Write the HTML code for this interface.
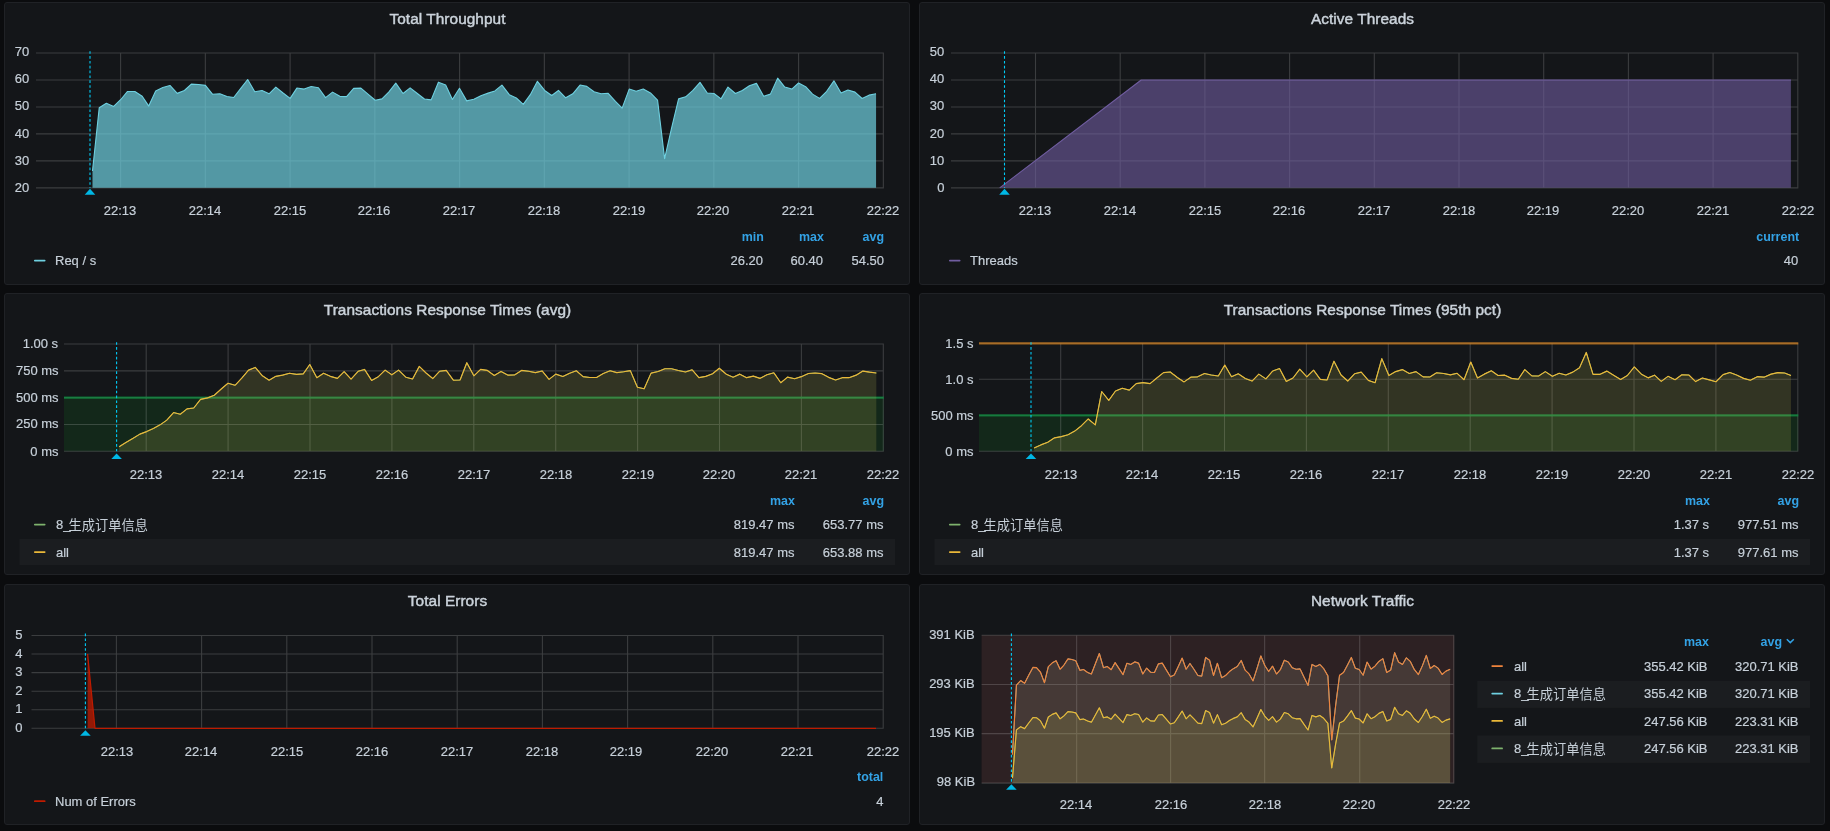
<!DOCTYPE html>
<html lang="en"><head><meta charset="utf-8"><title>JMeter Dashboard</title>
<style>
html,body{margin:0;padding:0;background:#0b0c0e;}
body{width:1830px;height:831px;position:relative;overflow:hidden;
 font-family:"Liberation Sans","Noto Sans CJK SC",sans-serif;color:#c7d0d9;font-size:13px;}
.panel{position:absolute;box-sizing:border-box;background:#141619;border:1px solid #202226;border-radius:3px;}
.panel svg{position:absolute;left:-1px;top:-1px;overflow:visible;}
.t{position:absolute;white-space:nowrap;line-height:16px;height:16px;transform:scaleX(0.955);}
.labels{position:absolute;left:0;top:0;right:0;bottom:0;will-change:transform;}
.al{transform-origin:0 50%;}
.ar{transform-origin:100% 50%;}
.ac{transform-origin:50% 50%;}
.title{font-size:15.4px;color:#cbd3db;-webkit-text-stroke:0.45px #cbd3db;letter-spacing:0.05px;transform:none;}
.ax{font-size:13.6px;-webkit-text-stroke:0.2px #c7d0d9;}
.lg{font-size:13.6px;-webkit-text-stroke:0.2px #c7d0d9;}
.hd{font-size:13.4px;font-weight:bold;color:#33a2e5;transform:scaleX(0.93);}
.cj{font-size:13.85px;line-height:0;position:relative;top:1px;margin-left:-2px;-webkit-text-stroke:0;}
</style></head>
<body>
<div class="panel" style="left:4px;top:2px;width:906px;height:282.5px"><svg width="906" height="282.5" viewBox="4 2 906 282.5" ><path d="M36 53H883.85M36 79.97H883.85M36 106.94H883.85M36 133.91H883.85M36 160.88H883.85M36 187.85H883.85M120.6 52.5V188.35M205.35 52.5V188.35M290.1 52.5V188.35M374.85 52.5V188.35M459.6 52.5V188.35M544.35 52.5V188.35M629.1 52.5V188.35M713.85 52.5V188.35M798.6 52.5V188.35M883.35 52.5V188.35" stroke="rgba(200,200,200,0.22)" stroke-width="1.1" fill="none"/><polygon points="92.49,187.85 92.49,171.02 99.23,107.82 106.36,103.2 113.68,106.47 120.62,99.73 127.55,91.45 134.87,91.45 142.2,96.26 148.75,106.09 155.68,91.06 162.81,87.59 169.94,85.47 177.26,93.37 184.39,90.48 191.33,84.12 198.46,84.51 205.39,85.38 212.64,94.31 219.88,93.81 226.96,96.5 233.7,97.51 240.78,88.42 247.68,79.49 254.76,91.79 262.01,90.44 269.08,93.81 275.82,87.07 283.07,92.97 290.14,98.36 296.88,88.08 304.13,89.09 311.2,86.56 318.45,87.74 325.53,97.68 332.6,92.12 339.85,96.34 346.59,96.67 353.66,88.42 360.91,88.08 367.99,94.14 375.23,100.21 381.97,98.86 388.71,92.12 395.79,83.19 403.03,93.47 410.11,87.91 417.35,93.47 424.43,99.03 431.17,99.87 438.42,82.18 445.66,85.05 452.4,99.54 459.48,88.25 466.72,100.88 473.8,99.2 480.88,95.83 488.12,93.13 494.86,90.94 501.94,85.05 509.27,94.65 516.34,98.02 523.25,104.42 530.33,94.65 537.41,81.34 544.65,90.44 551.73,95.49 558.47,90.44 565.71,97.85 572.79,93.81 580.03,85.05 586.77,86.39 594.02,91.79 601.1,93.81 608.17,93.3 615.42,101.39 622.16,108.13 629.23,89.09 636.14,91.28 643.22,89.09 650.46,92.97 657.54,100.04 664.62,158.68 671.52,128.35 678.6,98.86 685.68,96.84 692.92,90.44 700,82.35 707.25,92.97 713.98,93.47 721.06,98.86 727.97,87.07 735.38,93.47 742.29,90.44 749.37,85.72 756.44,83.36 763.69,96.34 770.43,94.14 777.67,78.14 784.75,87.07 791.83,89.09 798.57,83.02 805.64,86.73 812.55,94.14 819.63,98.36 826.71,91.28 833.95,80.83 841.03,92.97 847.94,89.93 855.01,92.12 862.09,98.53 869,95.16 876.07,93.81 876.07,187.85" fill="#6ed0e0" fill-opacity="0.7"/><polyline points="92.49,171.02 99.23,107.82 106.36,103.2 113.68,106.47 120.62,99.73 127.55,91.45 134.87,91.45 142.2,96.26 148.75,106.09 155.68,91.06 162.81,87.59 169.94,85.47 177.26,93.37 184.39,90.48 191.33,84.12 198.46,84.51 205.39,85.38 212.64,94.31 219.88,93.81 226.96,96.5 233.7,97.51 240.78,88.42 247.68,79.49 254.76,91.79 262.01,90.44 269.08,93.81 275.82,87.07 283.07,92.97 290.14,98.36 296.88,88.08 304.13,89.09 311.2,86.56 318.45,87.74 325.53,97.68 332.6,92.12 339.85,96.34 346.59,96.67 353.66,88.42 360.91,88.08 367.99,94.14 375.23,100.21 381.97,98.86 388.71,92.12 395.79,83.19 403.03,93.47 410.11,87.91 417.35,93.47 424.43,99.03 431.17,99.87 438.42,82.18 445.66,85.05 452.4,99.54 459.48,88.25 466.72,100.88 473.8,99.2 480.88,95.83 488.12,93.13 494.86,90.94 501.94,85.05 509.27,94.65 516.34,98.02 523.25,104.42 530.33,94.65 537.41,81.34 544.65,90.44 551.73,95.49 558.47,90.44 565.71,97.85 572.79,93.81 580.03,85.05 586.77,86.39 594.02,91.79 601.1,93.81 608.17,93.3 615.42,101.39 622.16,108.13 629.23,89.09 636.14,91.28 643.22,89.09 650.46,92.97 657.54,100.04 664.62,158.68 671.52,128.35 678.6,98.86 685.68,96.84 692.92,90.44 700,82.35 707.25,92.97 713.98,93.47 721.06,98.86 727.97,87.07 735.38,93.47 742.29,90.44 749.37,85.72 756.44,83.36 763.69,96.34 770.43,94.14 777.67,78.14 784.75,87.07 791.83,89.09 798.57,83.02 805.64,86.73 812.55,94.14 819.63,98.36 826.71,91.28 833.95,80.83 841.03,92.97 847.94,89.93 855.01,92.12 862.09,98.53 869,95.16 876.07,93.81" fill="none" stroke="#6ed0e0" stroke-width="1.1" stroke-linejoin="round"/><path d="M90 51.2V187.85" stroke="#00cbf5" stroke-width="1.1" stroke-dasharray="2.65 2.2" fill="none"/><path d="M84.7 194.85L90 188.75L95.3 194.85Z" fill="#00b7e4"/><path d="M34.8 260.55h9.9" stroke="#6ed0e0" stroke-width="1.7" stroke-linecap="round" fill="none"/></svg><div class="labels"><div class="t title ac" style="left:292.5px;width:300px;text-align:center;top:8px;">Total Throughput</div><div class="t ax ar" style="right:879.7px;top:41px;">70</div><div class="t ax ar" style="right:879.7px;top:68px;">60</div><div class="t ax ar" style="right:879.7px;top:95px;">50</div><div class="t ax ar" style="right:879.7px;top:123px;">40</div><div class="t ax ar" style="right:879.7px;top:150px;">30</div><div class="t ax ar" style="right:879.7px;top:177px;">20</div><div class="t ax ac" style="left:-34.8px;width:300px;text-align:center;top:200px;">22:13</div><div class="t ax ac" style="left:49.95px;width:300px;text-align:center;top:200px;">22:14</div><div class="t ax ac" style="left:134.7px;width:300px;text-align:center;top:200px;">22:15</div><div class="t ax ac" style="left:219.45px;width:300px;text-align:center;top:200px;">22:16</div><div class="t ax ac" style="left:304.2px;width:300px;text-align:center;top:200px;">22:17</div><div class="t ax ac" style="left:388.95px;width:300px;text-align:center;top:200px;">22:18</div><div class="t ax ac" style="left:473.7px;width:300px;text-align:center;top:200px;">22:19</div><div class="t ax ac" style="left:558.45px;width:300px;text-align:center;top:200px;">22:20</div><div class="t ax ac" style="left:643.2px;width:300px;text-align:center;top:200px;">22:21</div><div class="t ax ac" style="left:727.85px;width:300px;text-align:center;top:200px;">22:22</div><div class="t hd ar" style="right:145.7px;top:226px;">min</div><div class="t hd ar" style="right:85.2px;top:226px;">max</div><div class="t hd ar" style="right:25px;top:226px;">avg</div><div class="t lg al" style="left:50.4px;top:250px;">Req / s</div><div class="t lg ar" style="right:146px;top:250px;">26.20</div><div class="t lg ar" style="right:85.5px;top:250px;">60.40</div><div class="t lg ar" style="right:25.4px;top:250px;">54.50</div></div></div>
<div class="panel" style="left:919px;top:2px;width:906px;height:282.5px"><svg width="906" height="282.5" viewBox="919 2 906 282.5" ><path d="M951 53H1798.3M951 79.97H1798.3M951 106.94H1798.3M951 133.91H1798.3M951 160.88H1798.3M951 187.85H1798.3M1035.5 52.5V188.35M1120.2 52.5V188.35M1204.9 52.5V188.35M1289.6 52.5V188.35M1374.3 52.5V188.35M1459 52.5V188.35M1543.7 52.5V188.35M1628.4 52.5V188.35M1713.1 52.5V188.35M1797.8 52.5V188.35" stroke="rgba(200,200,200,0.22)" stroke-width="1.1" fill="none"/><polygon points="999.7,187.85 999.7,187.85 1141.2,79.97 1790.9,79.97 1790.9,187.85" fill="#705da0" fill-opacity="0.6"/><polyline points="999.7,187.85 1141.2,79.97 1790.9,79.97" fill="none" stroke="#705da0" stroke-width="1.1" stroke-linejoin="round"/><path d="M1004.5 51.2V187.85" stroke="#00cbf5" stroke-width="1.1" stroke-dasharray="2.65 2.2" fill="none"/><path d="M999.2 194.85L1004.5 188.75L1009.8 194.85Z" fill="#00b7e4"/><path d="M949.8 260.55h9.9" stroke="#705da0" stroke-width="1.7" stroke-linecap="round" fill="none"/></svg><div class="labels"><div class="t title ac" style="left:292.5px;width:300px;text-align:center;top:8px;">Active Threads</div><div class="t ax ar" style="right:879.7px;top:41px;">50</div><div class="t ax ar" style="right:879.7px;top:68px;">40</div><div class="t ax ar" style="right:879.7px;top:95px;">30</div><div class="t ax ar" style="right:879.7px;top:123px;">20</div><div class="t ax ar" style="right:879.7px;top:150px;">10</div><div class="t ax ar" style="right:879.7px;top:177px;">0</div><div class="t ax ac" style="left:-34.9px;width:300px;text-align:center;top:200px;">22:13</div><div class="t ax ac" style="left:49.8px;width:300px;text-align:center;top:200px;">22:14</div><div class="t ax ac" style="left:134.5px;width:300px;text-align:center;top:200px;">22:15</div><div class="t ax ac" style="left:219.2px;width:300px;text-align:center;top:200px;">22:16</div><div class="t ax ac" style="left:303.9px;width:300px;text-align:center;top:200px;">22:17</div><div class="t ax ac" style="left:388.6px;width:300px;text-align:center;top:200px;">22:18</div><div class="t ax ac" style="left:473.3px;width:300px;text-align:center;top:200px;">22:19</div><div class="t ax ac" style="left:558px;width:300px;text-align:center;top:200px;">22:20</div><div class="t ax ac" style="left:642.7px;width:300px;text-align:center;top:200px;">22:21</div><div class="t ax ac" style="left:727.5px;width:300px;text-align:center;top:200px;">22:22</div><div class="t hd ar" style="right:25px;top:226px;">current</div><div class="t lg al" style="left:50.3px;top:250px;">Threads</div><div class="t lg ar" style="right:25.4px;top:250px;">40</div></div></div>
<div class="panel" style="left:4px;top:293px;width:906px;height:282px"><svg width="906" height="282" viewBox="4 293 906 282" ><rect x="64" y="397.66" width="819.8" height="53.66" fill="rgb(11,237,50)" fill-opacity="0.085"/><path d="M64 344H883.8M64 370.83H883.8M64 397.66H883.8M64 424.49H883.8M64 451.32H883.8M146.2 343.5V451.82M228.1 343.5V451.82M310 343.5V451.82M391.9 343.5V451.82M473.8 343.5V451.82M555.7 343.5V451.82M637.6 343.5V451.82M719.5 343.5V451.82M801.4 343.5V451.82M883.3 343.5V451.82" stroke="rgba(200,200,200,0.22)" stroke-width="1.1" fill="none"/><path d="M64 397.66H883.8" stroke="rgb(6,163,69)" stroke-opacity="0.6" stroke-width="2.2"/><polygon points="119.12,451.32 119.12,446.76 125.86,442.55 133.11,438.34 139.85,434.13 146.59,431.6 153.33,428.57 160.07,424.86 166.81,420.14 173.55,412.56 180.29,414.25 187.03,408.85 193.77,408.01 200.51,399.42 207.58,397.9 214.32,395.21 221.23,388.97 227.97,383.24 235.05,385.27 241.79,378.02 248.53,370.1 255.27,367.41 262.01,375.49 269.08,380.21 275.82,376.34 282.56,375.16 289.47,373.3 296.55,374.31 303.29,373.81 309.77,364.54 316.85,377.68 323.59,373.3 330.33,376.34 337.41,378.36 344.14,371.62 351.05,379.2 358.13,371.28 364.53,369.43 371.61,380.38 378.35,376.67 385.09,370.1 391.83,374.82 398.57,370.1 405.81,377.18 412.55,379.03 419.29,366.39 426.03,372.97 432.77,378.53 439.51,371.28 446.25,370.44 453.33,380.21 460.07,380.04 466.81,362.69 473.88,375.83 480.62,369.43 487.36,370.44 494.27,375.49 501.01,371.45 508.09,375.16 514.83,374.82 521.57,370.44 528.64,371.28 535.38,372.63 542.12,370.94 549.03,379.37 555.77,374.14 562.85,376.5 569.59,373.3 576.33,370.78 583.07,376.67 589.81,377.51 596.55,377.51 603.29,373.47 610.11,370.78 616.85,372.63 623.59,371.79 630.33,370.61 637.41,387.29 644.14,388.8 651.05,373.13 658.13,371.45 664.87,368.75 671.61,368.75 678.35,370.44 685.43,371.95 692.17,369.76 698.9,377.68 705.81,376.34 712.55,373.81 719.29,368.25 726.37,374.31 733.11,377.18 739.85,374.14 746.59,377.68 753.33,376.17 760.07,378.36 766.81,374.82 773.88,372.8 780.79,382.74 787.53,377.18 794.61,378.69 801.35,376.67 808.42,373.47 815.16,372.97 821.9,373.64 828.64,377.35 835.55,380.04 842.29,377.68 849.03,377.68 856.11,375.16 862.85,371.11 869.59,372.12 876.33,372.97 876.33,451.32" fill="#7eb26d" fill-opacity="0.1"/><polyline points="119.12,446.76 125.86,442.55 133.11,438.34 139.85,434.13 146.59,431.6 153.33,428.57 160.07,424.86 166.81,420.14 173.55,412.56 180.29,414.25 187.03,408.85 193.77,408.01 200.51,399.42 207.58,397.9 214.32,395.21 221.23,388.97 227.97,383.24 235.05,385.27 241.79,378.02 248.53,370.1 255.27,367.41 262.01,375.49 269.08,380.21 275.82,376.34 282.56,375.16 289.47,373.3 296.55,374.31 303.29,373.81 309.77,364.54 316.85,377.68 323.59,373.3 330.33,376.34 337.41,378.36 344.14,371.62 351.05,379.2 358.13,371.28 364.53,369.43 371.61,380.38 378.35,376.67 385.09,370.1 391.83,374.82 398.57,370.1 405.81,377.18 412.55,379.03 419.29,366.39 426.03,372.97 432.77,378.53 439.51,371.28 446.25,370.44 453.33,380.21 460.07,380.04 466.81,362.69 473.88,375.83 480.62,369.43 487.36,370.44 494.27,375.49 501.01,371.45 508.09,375.16 514.83,374.82 521.57,370.44 528.64,371.28 535.38,372.63 542.12,370.94 549.03,379.37 555.77,374.14 562.85,376.5 569.59,373.3 576.33,370.78 583.07,376.67 589.81,377.51 596.55,377.51 603.29,373.47 610.11,370.78 616.85,372.63 623.59,371.79 630.33,370.61 637.41,387.29 644.14,388.8 651.05,373.13 658.13,371.45 664.87,368.75 671.61,368.75 678.35,370.44 685.43,371.95 692.17,369.76 698.9,377.68 705.81,376.34 712.55,373.81 719.29,368.25 726.37,374.31 733.11,377.18 739.85,374.14 746.59,377.68 753.33,376.17 760.07,378.36 766.81,374.82 773.88,372.8 780.79,382.74 787.53,377.18 794.61,378.69 801.35,376.67 808.42,373.47 815.16,372.97 821.9,373.64 828.64,377.35 835.55,380.04 842.29,377.68 849.03,377.68 856.11,375.16 862.85,371.11 869.59,372.12 876.33,372.97" fill="none" stroke="#7eb26d" stroke-width="0.9" stroke-linejoin="round"/><polygon points="119.12,451.32 119.12,446.76 125.86,442.55 133.11,438.34 139.85,434.13 146.59,431.6 153.33,428.57 160.07,424.86 166.81,420.14 173.55,412.56 180.29,414.25 187.03,408.85 193.77,408.01 200.51,399.42 207.58,397.9 214.32,395.21 221.23,388.97 227.97,383.24 235.05,385.27 241.79,378.02 248.53,370.1 255.27,367.41 262.01,375.49 269.08,380.21 275.82,376.34 282.56,375.16 289.47,373.3 296.55,374.31 303.29,373.81 309.77,364.54 316.85,377.68 323.59,373.3 330.33,376.34 337.41,378.36 344.14,371.62 351.05,379.2 358.13,371.28 364.53,369.43 371.61,380.38 378.35,376.67 385.09,370.1 391.83,374.82 398.57,370.1 405.81,377.18 412.55,379.03 419.29,366.39 426.03,372.97 432.77,378.53 439.51,371.28 446.25,370.44 453.33,380.21 460.07,380.04 466.81,362.69 473.88,375.83 480.62,369.43 487.36,370.44 494.27,375.49 501.01,371.45 508.09,375.16 514.83,374.82 521.57,370.44 528.64,371.28 535.38,372.63 542.12,370.94 549.03,379.37 555.77,374.14 562.85,376.5 569.59,373.3 576.33,370.78 583.07,376.67 589.81,377.51 596.55,377.51 603.29,373.47 610.11,370.78 616.85,372.63 623.59,371.79 630.33,370.61 637.41,387.29 644.14,388.8 651.05,373.13 658.13,371.45 664.87,368.75 671.61,368.75 678.35,370.44 685.43,371.95 692.17,369.76 698.9,377.68 705.81,376.34 712.55,373.81 719.29,368.25 726.37,374.31 733.11,377.18 739.85,374.14 746.59,377.68 753.33,376.17 760.07,378.36 766.81,374.82 773.88,372.8 780.79,382.74 787.53,377.18 794.61,378.69 801.35,376.67 808.42,373.47 815.16,372.97 821.9,373.64 828.64,377.35 835.55,380.04 842.29,377.68 849.03,377.68 856.11,375.16 862.85,371.11 869.59,372.12 876.33,372.97 876.33,451.32" fill="#eab839" fill-opacity="0.1"/><polyline points="119.12,446.76 125.86,442.55 133.11,438.34 139.85,434.13 146.59,431.6 153.33,428.57 160.07,424.86 166.81,420.14 173.55,412.56 180.29,414.25 187.03,408.85 193.77,408.01 200.51,399.42 207.58,397.9 214.32,395.21 221.23,388.97 227.97,383.24 235.05,385.27 241.79,378.02 248.53,370.1 255.27,367.41 262.01,375.49 269.08,380.21 275.82,376.34 282.56,375.16 289.47,373.3 296.55,374.31 303.29,373.81 309.77,364.54 316.85,377.68 323.59,373.3 330.33,376.34 337.41,378.36 344.14,371.62 351.05,379.2 358.13,371.28 364.53,369.43 371.61,380.38 378.35,376.67 385.09,370.1 391.83,374.82 398.57,370.1 405.81,377.18 412.55,379.03 419.29,366.39 426.03,372.97 432.77,378.53 439.51,371.28 446.25,370.44 453.33,380.21 460.07,380.04 466.81,362.69 473.88,375.83 480.62,369.43 487.36,370.44 494.27,375.49 501.01,371.45 508.09,375.16 514.83,374.82 521.57,370.44 528.64,371.28 535.38,372.63 542.12,370.94 549.03,379.37 555.77,374.14 562.85,376.5 569.59,373.3 576.33,370.78 583.07,376.67 589.81,377.51 596.55,377.51 603.29,373.47 610.11,370.78 616.85,372.63 623.59,371.79 630.33,370.61 637.41,387.29 644.14,388.8 651.05,373.13 658.13,371.45 664.87,368.75 671.61,368.75 678.35,370.44 685.43,371.95 692.17,369.76 698.9,377.68 705.81,376.34 712.55,373.81 719.29,368.25 726.37,374.31 733.11,377.18 739.85,374.14 746.59,377.68 753.33,376.17 760.07,378.36 766.81,374.82 773.88,372.8 780.79,382.74 787.53,377.18 794.61,378.69 801.35,376.67 808.42,373.47 815.16,372.97 821.9,373.64 828.64,377.35 835.55,380.04 842.29,377.68 849.03,377.68 856.11,375.16 862.85,371.11 869.59,372.12 876.33,372.97" fill="none" stroke="#eab839" stroke-width="1.15" stroke-linejoin="round"/><path d="M116.6 342.2V451.32" stroke="#00cbf5" stroke-width="1.1" stroke-dasharray="2.65 2.2" fill="none"/><path d="M111.3 459.12L116.6 453.52L121.9 459.12Z" fill="#00b7e4"/><path d="M34.8 524.55h9.9" stroke="#7eb26d" stroke-width="1.7" stroke-linecap="round" fill="none"/><rect x="19.5" y="539" width="875.5" height="26" fill="#1b1d20"/><path d="M34.8 552.05h9.9" stroke="#eab839" stroke-width="1.7" stroke-linecap="round" fill="none"/></svg><div class="labels"><div class="t title ac" style="left:292.5px;width:300px;text-align:center;top:8px;">Transactions Response Times (avg)</div><div class="t ax ar" style="right:850.7px;top:42px;">1.00 s</div><div class="t ax ar" style="right:850.7px;top:69px;">750 ms</div><div class="t ax ar" style="right:850.7px;top:96px;">500 ms</div><div class="t ax ar" style="right:850.7px;top:122px;">250 ms</div><div class="t ax ar" style="right:850.7px;top:150px;">0 ms</div><div class="t ax ac" style="left:-8.9px;width:300px;text-align:center;top:173px;">22:13</div><div class="t ax ac" style="left:73px;width:300px;text-align:center;top:173px;">22:14</div><div class="t ax ac" style="left:154.9px;width:300px;text-align:center;top:173px;">22:15</div><div class="t ax ac" style="left:236.8px;width:300px;text-align:center;top:173px;">22:16</div><div class="t ax ac" style="left:318.7px;width:300px;text-align:center;top:173px;">22:17</div><div class="t ax ac" style="left:400.6px;width:300px;text-align:center;top:173px;">22:18</div><div class="t ax ac" style="left:482.5px;width:300px;text-align:center;top:173px;">22:19</div><div class="t ax ac" style="left:564.4px;width:300px;text-align:center;top:173px;">22:20</div><div class="t ax ac" style="left:646.3px;width:300px;text-align:center;top:173px;">22:21</div><div class="t ax ac" style="left:728.2px;width:300px;text-align:center;top:173px;">22:22</div><div class="t hd ar" style="right:114.2px;top:199px;">max</div><div class="t hd ar" style="right:24.8px;top:199px;">avg</div><div class="t lg al" style="left:51.2px;top:223px;">8_<span class="cj">生成订单信息</span></div><div class="t lg al" style="left:51.2px;top:251px;">all</div><div class="t lg ar" style="right:114.5px;top:223px;">819.47 ms</div><div class="t lg ar" style="right:25.2px;top:223px;">653.77 ms</div><div class="t lg ar" style="right:114.5px;top:251px;">819.47 ms</div><div class="t lg ar" style="right:25.2px;top:251px;">653.88 ms</div></div></div>
<div class="panel" style="left:919px;top:293px;width:906px;height:282px"><svg width="906" height="282" viewBox="919 293 906 282" ><rect x="979" y="415.3" width="819.3" height="36" fill="rgb(11,237,50)" fill-opacity="0.085"/><path d="M979 343.3H1798.3M979 379.3H1798.3M979 415.3H1798.3M979 451.3H1798.3M1060.7 342.8V451.8M1142.6 342.8V451.8M1224.5 342.8V451.8M1306.4 342.8V451.8M1388.3 342.8V451.8M1470.2 342.8V451.8M1552.1 342.8V451.8M1634 342.8V451.8M1715.9 342.8V451.8M1797.8 342.8V451.8" stroke="rgba(200,200,200,0.22)" stroke-width="1.1" fill="none"/><path d="M979 415.3H1798.3" stroke="rgb(6,163,69)" stroke-opacity="0.6" stroke-width="2.2"/><path d="M979 343.3H1798.3" stroke="rgb(247,149,32)" stroke-opacity="0.6" stroke-width="2.2"/><polygon points="1034.12,451.3 1034.12,447.94 1040.86,444.91 1047.77,442.22 1054.51,437.83 1061.25,436.66 1067.99,434.8 1074.73,431.1 1081.47,425.7 1088.21,418.96 1095.29,424.86 1101.69,391.5 1108.77,400.43 1115.51,390.99 1122.25,388.3 1129.32,390.15 1136.23,383.58 1142.97,382.57 1150.05,383.58 1156.79,378.02 1163.53,372.63 1170.27,371.95 1177.34,377.51 1184.08,381.9 1190.82,377.18 1197.56,376.84 1204.47,373.47 1211.21,374.99 1218.29,376 1224.77,365.05 1231.51,376.67 1238.25,373.81 1245.33,378.53 1252.07,381.05 1258.81,374.14 1265.88,378.86 1272.79,370.94 1279.53,368.58 1286.27,381.39 1293.01,378.02 1299.75,369.09 1306.83,376.84 1313.57,370.1 1320.31,379.37 1327.05,380.04 1333.96,361.17 1341.03,374.99 1347.77,381.05 1354.51,373.81 1361.25,372.12 1368.33,380.38 1375.07,382.74 1381.81,358.64 1388.88,375.49 1395.62,371.62 1402.36,369.6 1409.27,373.47 1416.01,371.62 1423.09,376.84 1429.83,377.01 1436.57,372.8 1443.64,373.47 1450.38,374.82 1457.12,373.3 1464.03,379.71 1470.77,362.01 1477.51,378.02 1484.25,374.14 1491.33,370.78 1498.07,375.49 1504.81,375.16 1511.55,378.36 1518.29,379.2 1524.77,369.6 1531.85,375.83 1538.59,376 1545.33,371.62 1552.41,376.34 1559.14,373.3 1565.88,374.99 1572.79,372.12 1579.53,367.74 1586.27,352.41 1593.01,374.31 1600.09,374.31 1606.83,371.11 1613.57,375.16 1620.64,379.54 1627.38,375.49 1634.29,366.9 1641.37,374.14 1648.11,377.85 1654.51,375.16 1661.25,381.39 1667.99,376.34 1675.07,379.71 1681.81,374.82 1688.88,374.99 1695.62,381.56 1702.36,378.02 1709.27,379.87 1716.01,381.73 1723.09,374.65 1729.83,372.46 1736.57,374.99 1743.64,378.36 1750.38,380.21 1757.29,376.67 1764.03,377.18 1771.11,374.14 1777.85,372.63 1784.59,372.97 1790.99,375.49 1790.99,451.3" fill="#7eb26d" fill-opacity="0.1"/><polyline points="1034.12,447.94 1040.86,444.91 1047.77,442.22 1054.51,437.83 1061.25,436.66 1067.99,434.8 1074.73,431.1 1081.47,425.7 1088.21,418.96 1095.29,424.86 1101.69,391.5 1108.77,400.43 1115.51,390.99 1122.25,388.3 1129.32,390.15 1136.23,383.58 1142.97,382.57 1150.05,383.58 1156.79,378.02 1163.53,372.63 1170.27,371.95 1177.34,377.51 1184.08,381.9 1190.82,377.18 1197.56,376.84 1204.47,373.47 1211.21,374.99 1218.29,376 1224.77,365.05 1231.51,376.67 1238.25,373.81 1245.33,378.53 1252.07,381.05 1258.81,374.14 1265.88,378.86 1272.79,370.94 1279.53,368.58 1286.27,381.39 1293.01,378.02 1299.75,369.09 1306.83,376.84 1313.57,370.1 1320.31,379.37 1327.05,380.04 1333.96,361.17 1341.03,374.99 1347.77,381.05 1354.51,373.81 1361.25,372.12 1368.33,380.38 1375.07,382.74 1381.81,358.64 1388.88,375.49 1395.62,371.62 1402.36,369.6 1409.27,373.47 1416.01,371.62 1423.09,376.84 1429.83,377.01 1436.57,372.8 1443.64,373.47 1450.38,374.82 1457.12,373.3 1464.03,379.71 1470.77,362.01 1477.51,378.02 1484.25,374.14 1491.33,370.78 1498.07,375.49 1504.81,375.16 1511.55,378.36 1518.29,379.2 1524.77,369.6 1531.85,375.83 1538.59,376 1545.33,371.62 1552.41,376.34 1559.14,373.3 1565.88,374.99 1572.79,372.12 1579.53,367.74 1586.27,352.41 1593.01,374.31 1600.09,374.31 1606.83,371.11 1613.57,375.16 1620.64,379.54 1627.38,375.49 1634.29,366.9 1641.37,374.14 1648.11,377.85 1654.51,375.16 1661.25,381.39 1667.99,376.34 1675.07,379.71 1681.81,374.82 1688.88,374.99 1695.62,381.56 1702.36,378.02 1709.27,379.87 1716.01,381.73 1723.09,374.65 1729.83,372.46 1736.57,374.99 1743.64,378.36 1750.38,380.21 1757.29,376.67 1764.03,377.18 1771.11,374.14 1777.85,372.63 1784.59,372.97 1790.99,375.49" fill="none" stroke="#7eb26d" stroke-width="0.9" stroke-linejoin="round"/><polygon points="1034.12,451.3 1034.12,447.94 1040.86,444.91 1047.77,442.22 1054.51,437.83 1061.25,436.66 1067.99,434.8 1074.73,431.1 1081.47,425.7 1088.21,418.96 1095.29,424.86 1101.69,391.5 1108.77,400.43 1115.51,390.99 1122.25,388.3 1129.32,390.15 1136.23,383.58 1142.97,382.57 1150.05,383.58 1156.79,378.02 1163.53,372.63 1170.27,371.95 1177.34,377.51 1184.08,381.9 1190.82,377.18 1197.56,376.84 1204.47,373.47 1211.21,374.99 1218.29,376 1224.77,365.05 1231.51,376.67 1238.25,373.81 1245.33,378.53 1252.07,381.05 1258.81,374.14 1265.88,378.86 1272.79,370.94 1279.53,368.58 1286.27,381.39 1293.01,378.02 1299.75,369.09 1306.83,376.84 1313.57,370.1 1320.31,379.37 1327.05,380.04 1333.96,361.17 1341.03,374.99 1347.77,381.05 1354.51,373.81 1361.25,372.12 1368.33,380.38 1375.07,382.74 1381.81,358.64 1388.88,375.49 1395.62,371.62 1402.36,369.6 1409.27,373.47 1416.01,371.62 1423.09,376.84 1429.83,377.01 1436.57,372.8 1443.64,373.47 1450.38,374.82 1457.12,373.3 1464.03,379.71 1470.77,362.01 1477.51,378.02 1484.25,374.14 1491.33,370.78 1498.07,375.49 1504.81,375.16 1511.55,378.36 1518.29,379.2 1524.77,369.6 1531.85,375.83 1538.59,376 1545.33,371.62 1552.41,376.34 1559.14,373.3 1565.88,374.99 1572.79,372.12 1579.53,367.74 1586.27,352.41 1593.01,374.31 1600.09,374.31 1606.83,371.11 1613.57,375.16 1620.64,379.54 1627.38,375.49 1634.29,366.9 1641.37,374.14 1648.11,377.85 1654.51,375.16 1661.25,381.39 1667.99,376.34 1675.07,379.71 1681.81,374.82 1688.88,374.99 1695.62,381.56 1702.36,378.02 1709.27,379.87 1716.01,381.73 1723.09,374.65 1729.83,372.46 1736.57,374.99 1743.64,378.36 1750.38,380.21 1757.29,376.67 1764.03,377.18 1771.11,374.14 1777.85,372.63 1784.59,372.97 1790.99,375.49 1790.99,451.3" fill="#eab839" fill-opacity="0.1"/><polyline points="1034.12,447.94 1040.86,444.91 1047.77,442.22 1054.51,437.83 1061.25,436.66 1067.99,434.8 1074.73,431.1 1081.47,425.7 1088.21,418.96 1095.29,424.86 1101.69,391.5 1108.77,400.43 1115.51,390.99 1122.25,388.3 1129.32,390.15 1136.23,383.58 1142.97,382.57 1150.05,383.58 1156.79,378.02 1163.53,372.63 1170.27,371.95 1177.34,377.51 1184.08,381.9 1190.82,377.18 1197.56,376.84 1204.47,373.47 1211.21,374.99 1218.29,376 1224.77,365.05 1231.51,376.67 1238.25,373.81 1245.33,378.53 1252.07,381.05 1258.81,374.14 1265.88,378.86 1272.79,370.94 1279.53,368.58 1286.27,381.39 1293.01,378.02 1299.75,369.09 1306.83,376.84 1313.57,370.1 1320.31,379.37 1327.05,380.04 1333.96,361.17 1341.03,374.99 1347.77,381.05 1354.51,373.81 1361.25,372.12 1368.33,380.38 1375.07,382.74 1381.81,358.64 1388.88,375.49 1395.62,371.62 1402.36,369.6 1409.27,373.47 1416.01,371.62 1423.09,376.84 1429.83,377.01 1436.57,372.8 1443.64,373.47 1450.38,374.82 1457.12,373.3 1464.03,379.71 1470.77,362.01 1477.51,378.02 1484.25,374.14 1491.33,370.78 1498.07,375.49 1504.81,375.16 1511.55,378.36 1518.29,379.2 1524.77,369.6 1531.85,375.83 1538.59,376 1545.33,371.62 1552.41,376.34 1559.14,373.3 1565.88,374.99 1572.79,372.12 1579.53,367.74 1586.27,352.41 1593.01,374.31 1600.09,374.31 1606.83,371.11 1613.57,375.16 1620.64,379.54 1627.38,375.49 1634.29,366.9 1641.37,374.14 1648.11,377.85 1654.51,375.16 1661.25,381.39 1667.99,376.34 1675.07,379.71 1681.81,374.82 1688.88,374.99 1695.62,381.56 1702.36,378.02 1709.27,379.87 1716.01,381.73 1723.09,374.65 1729.83,372.46 1736.57,374.99 1743.64,378.36 1750.38,380.21 1757.29,376.67 1764.03,377.18 1771.11,374.14 1777.85,372.63 1784.59,372.97 1790.99,375.49" fill="none" stroke="#eab839" stroke-width="1.15" stroke-linejoin="round"/><path d="M1031 342.2V451.3" stroke="#00cbf5" stroke-width="1.1" stroke-dasharray="2.65 2.2" fill="none"/><path d="M1025.7 459.1L1031 453.5L1036.3 459.1Z" fill="#00b7e4"/><path d="M949.8 524.55h9.9" stroke="#7eb26d" stroke-width="1.7" stroke-linecap="round" fill="none"/><rect x="934.5" y="539" width="875.5" height="26" fill="#1b1d20"/><path d="M949.8 552.05h9.9" stroke="#eab839" stroke-width="1.7" stroke-linecap="round" fill="none"/></svg><div class="labels"><div class="t title ac" style="left:292.5px;width:300px;text-align:center;top:8px;">Transactions Response Times (95th pct)</div><div class="t ax ar" style="right:850.7px;top:42px;">1.5 s</div><div class="t ax ar" style="right:850.7px;top:78px;">1.0 s</div><div class="t ax ar" style="right:850.7px;top:114px;">500 ms</div><div class="t ax ar" style="right:850.7px;top:150px;">0 ms</div><div class="t ax ac" style="left:-9.5px;width:300px;text-align:center;top:173px;">22:13</div><div class="t ax ac" style="left:72.4px;width:300px;text-align:center;top:173px;">22:14</div><div class="t ax ac" style="left:154.3px;width:300px;text-align:center;top:173px;">22:15</div><div class="t ax ac" style="left:236.2px;width:300px;text-align:center;top:173px;">22:16</div><div class="t ax ac" style="left:318.1px;width:300px;text-align:center;top:173px;">22:17</div><div class="t ax ac" style="left:400px;width:300px;text-align:center;top:173px;">22:18</div><div class="t ax ac" style="left:481.9px;width:300px;text-align:center;top:173px;">22:19</div><div class="t ax ac" style="left:563.8px;width:300px;text-align:center;top:173px;">22:20</div><div class="t ax ac" style="left:645.7px;width:300px;text-align:center;top:173px;">22:21</div><div class="t ax ac" style="left:727.6px;width:300px;text-align:center;top:173px;">22:22</div><div class="t hd ar" style="right:114.2px;top:199px;">max</div><div class="t hd ar" style="right:24.8px;top:199px;">avg</div><div class="t lg al" style="left:51.3px;top:223px;">8_<span class="cj">生成订单信息</span></div><div class="t lg al" style="left:51.3px;top:251px;">all</div><div class="t lg ar" style="right:114.5px;top:223px;">1.37 s</div><div class="t lg ar" style="right:25.2px;top:223px;">977.51 ms</div><div class="t lg ar" style="right:114.5px;top:251px;">1.37 s</div><div class="t lg ar" style="right:25.2px;top:251px;">977.61 ms</div></div></div>
<div class="panel" style="left:4px;top:584px;width:906px;height:241px"><svg width="906" height="241" viewBox="4 584 906 241" ><path d="M31.5 635.5H883.7M31.5 654.06H883.7M31.5 672.62H883.7M31.5 691.18H883.7M31.5 709.74H883.7M31.5 728.3H883.7M116.4 635V728.8M201.6 635V728.8M286.8 635V728.8M372 635V728.8M457.2 635V728.8M542.4 635V728.8M627.6 635V728.8M712.8 635V728.8M798 635V728.8M883.2 635V728.8" stroke="rgba(200,200,200,0.22)" stroke-width="1.1" fill="none"/><polygon points="87.6,728.3 87.6,654.06 95,728.3 876,728.3 876,728.3" fill="#bf1b00" fill-opacity="0.75"/><polyline points="87.6,654.06 95,728.3 876,728.3" fill="none" stroke="#bf1b00" stroke-width="1.2" stroke-linejoin="round"/><path d="M85.4 633.6V728.3" stroke="#00cbf5" stroke-width="1.1" stroke-dasharray="2.65 2.2" fill="none"/><path d="M80.1 735.8L85.4 730.3L90.7 735.8Z" fill="#00b7e4"/><path d="M34.8 801.15h9.9" stroke="#bf1b00" stroke-width="1.7" stroke-linecap="round" fill="none"/></svg><div class="labels"><div class="t title ac" style="left:292.5px;width:300px;text-align:center;top:8px;">Total Errors</div><div class="t ax ar" style="right:886.8px;top:42px;">5</div><div class="t ax ar" style="right:886.8px;top:61px;">4</div><div class="t ax ar" style="right:886.8px;top:79px;">3</div><div class="t ax ar" style="right:886.8px;top:98px;">2</div><div class="t ax ar" style="right:886.8px;top:116px;">1</div><div class="t ax ar" style="right:886.8px;top:135px;">0</div><div class="t ax ac" style="left:-38.2px;width:300px;text-align:center;top:159px;">22:13</div><div class="t ax ac" style="left:46.1px;width:300px;text-align:center;top:159px;">22:14</div><div class="t ax ac" style="left:131.6px;width:300px;text-align:center;top:159px;">22:15</div><div class="t ax ac" style="left:216.7px;width:300px;text-align:center;top:159px;">22:16</div><div class="t ax ac" style="left:302px;width:300px;text-align:center;top:159px;">22:17</div><div class="t ax ac" style="left:387px;width:300px;text-align:center;top:159px;">22:18</div><div class="t ax ac" style="left:471.4px;width:300px;text-align:center;top:159px;">22:19</div><div class="t ax ac" style="left:557px;width:300px;text-align:center;top:159px;">22:20</div><div class="t ax ac" style="left:641.7px;width:300px;text-align:center;top:159px;">22:21</div><div class="t ax ac" style="left:728.1px;width:300px;text-align:center;top:159px;">22:22</div><div class="t hd ar" style="right:25.3px;top:184px;">total</div><div class="t lg al" style="left:50.4px;top:209px;">Num of Errors</div><div class="t lg ar" style="right:25.2px;top:209px;">4</div></div></div>
<div class="panel" style="left:919px;top:584px;width:906px;height:241px"><svg width="906" height="241" viewBox="919 584 906 241" ><rect x="981.6" y="635.3" width="472.65" height="147.8" fill="rgb(234,112,112)" fill-opacity="0.12"/><path d="M981.6 635.3H1454.25M981.6 684.5H1454.25M981.6 733.6H1454.25M981.6 783.1H1454.25M1076.65 634.8V783.6M1170.6 634.8V783.6M1264.65 634.8V783.6M1359.7 634.8V783.6M1453.75 634.8V783.6" stroke="rgba(200,200,200,0.22)" stroke-width="1.1" fill="none"/><polygon points="1012.46,783.1 1012.46,754.44 1016.43,685.13 1020.64,680.55 1024.61,683.32 1028.71,675.26 1032.92,667.44 1036.53,667.68 1040.5,672.25 1044.47,682.72 1048.32,666.71 1052.29,662.86 1056.14,660.7 1060.11,669.24 1063.97,665.03 1067.94,658.89 1071.91,659.49 1075.76,660.7 1079.85,670.32 1083.46,669.48 1087.67,672.49 1091.4,674.06 1095.25,664.07 1099.34,653.48 1103.44,667.68 1107.29,666.47 1111.14,669.72 1115.11,662.62 1119.08,668.64 1123.05,674.66 1126.9,663.23 1130.75,664.43 1134.72,661.9 1138.57,663.1 1142.79,674.06 1146.64,668.04 1150.61,672.25 1154.46,672.49 1158.43,663.83 1162.28,663.1 1166.25,669.84 1170.46,676.7 1174.31,674.9 1178.29,666.47 1182.14,658.05 1186.11,669.24 1189.96,663.47 1193.93,669.24 1197.9,675.5 1201.75,676.1 1205.6,657.45 1209.57,660.22 1213.54,675.5 1217.39,663.23 1221.61,677.67 1225.59,675.5 1229.44,671.53 1233.41,668.64 1237.26,666.47 1241.23,660.46 1245.08,670.08 1249.06,673.94 1253.03,680.91 1256.88,668.88 1260.85,655.88 1264.7,665.27 1268.67,671.53 1272.52,666.11 1276.49,674.06 1280.34,669.72 1284.31,660.22 1288.29,662.02 1292.14,667.68 1296.11,669.24 1300.08,668.88 1304.05,677.3 1308.02,685.37 1311.99,664.43 1315.84,666.47 1319.81,664.43 1323.66,668.52 1327.88,675.86 1331.73,739.88 1335.7,704.98 1339.55,675.26 1343.52,672.49 1347.37,665.27 1351.34,657.45 1355.31,668.28 1359.16,669.48 1363.13,675.26 1367.11,662.02 1371.08,669.12 1374.93,666.23 1378.9,661.42 1382.87,658.65 1386.72,672.49 1390.69,670.08 1394.66,652.64 1398.51,662.02 1402.48,664.43 1406.34,657.81 1410.31,661.42 1414.28,669.48 1418.37,674.54 1422.34,665.87 1426.31,655.4 1430.3,668.5 1434.15,665.49 1438.12,668.13 1442.09,674.51 1445.94,671.14 1450.16,669.34 1450.16,783.1" fill="#6ed0e0" fill-opacity="0.1"/><polyline points="1012.46,754.44 1016.43,685.13 1020.64,680.55 1024.61,683.32 1028.71,675.26 1032.92,667.44 1036.53,667.68 1040.5,672.25 1044.47,682.72 1048.32,666.71 1052.29,662.86 1056.14,660.7 1060.11,669.24 1063.97,665.03 1067.94,658.89 1071.91,659.49 1075.76,660.7 1079.85,670.32 1083.46,669.48 1087.67,672.49 1091.4,674.06 1095.25,664.07 1099.34,653.48 1103.44,667.68 1107.29,666.47 1111.14,669.72 1115.11,662.62 1119.08,668.64 1123.05,674.66 1126.9,663.23 1130.75,664.43 1134.72,661.9 1138.57,663.1 1142.79,674.06 1146.64,668.04 1150.61,672.25 1154.46,672.49 1158.43,663.83 1162.28,663.1 1166.25,669.84 1170.46,676.7 1174.31,674.9 1178.29,666.47 1182.14,658.05 1186.11,669.24 1189.96,663.47 1193.93,669.24 1197.9,675.5 1201.75,676.1 1205.6,657.45 1209.57,660.22 1213.54,675.5 1217.39,663.23 1221.61,677.67 1225.59,675.5 1229.44,671.53 1233.41,668.64 1237.26,666.47 1241.23,660.46 1245.08,670.08 1249.06,673.94 1253.03,680.91 1256.88,668.88 1260.85,655.88 1264.7,665.27 1268.67,671.53 1272.52,666.11 1276.49,674.06 1280.34,669.72 1284.31,660.22 1288.29,662.02 1292.14,667.68 1296.11,669.24 1300.08,668.88 1304.05,677.3 1308.02,685.37 1311.99,664.43 1315.84,666.47 1319.81,664.43 1323.66,668.52 1327.88,675.86 1331.73,739.88 1335.7,704.98 1339.55,675.26 1343.52,672.49 1347.37,665.27 1351.34,657.45 1355.31,668.28 1359.16,669.48 1363.13,675.26 1367.11,662.02 1371.08,669.12 1374.93,666.23 1378.9,661.42 1382.87,658.65 1386.72,672.49 1390.69,670.08 1394.66,652.64 1398.51,662.02 1402.48,664.43 1406.34,657.81 1410.31,661.42 1414.28,669.48 1418.37,674.54 1422.34,665.87 1426.31,655.4 1430.3,668.5 1434.15,665.49 1438.12,668.13 1442.09,674.51 1445.94,671.14 1450.16,669.34" fill="none" stroke="#6ed0e0" stroke-width="0.8" stroke-linejoin="round"/><polygon points="1012.46,783.1 1012.46,754.44 1016.43,685.13 1020.64,680.55 1024.61,683.32 1028.71,675.26 1032.92,667.44 1036.53,667.68 1040.5,672.25 1044.47,682.72 1048.32,666.71 1052.29,662.86 1056.14,660.7 1060.11,669.24 1063.97,665.03 1067.94,658.89 1071.91,659.49 1075.76,660.7 1079.85,670.32 1083.46,669.48 1087.67,672.49 1091.4,674.06 1095.25,664.07 1099.34,653.48 1103.44,667.68 1107.29,666.47 1111.14,669.72 1115.11,662.62 1119.08,668.64 1123.05,674.66 1126.9,663.23 1130.75,664.43 1134.72,661.9 1138.57,663.1 1142.79,674.06 1146.64,668.04 1150.61,672.25 1154.46,672.49 1158.43,663.83 1162.28,663.1 1166.25,669.84 1170.46,676.7 1174.31,674.9 1178.29,666.47 1182.14,658.05 1186.11,669.24 1189.96,663.47 1193.93,669.24 1197.9,675.5 1201.75,676.1 1205.6,657.45 1209.57,660.22 1213.54,675.5 1217.39,663.23 1221.61,677.67 1225.59,675.5 1229.44,671.53 1233.41,668.64 1237.26,666.47 1241.23,660.46 1245.08,670.08 1249.06,673.94 1253.03,680.91 1256.88,668.88 1260.85,655.88 1264.7,665.27 1268.67,671.53 1272.52,666.11 1276.49,674.06 1280.34,669.72 1284.31,660.22 1288.29,662.02 1292.14,667.68 1296.11,669.24 1300.08,668.88 1304.05,677.3 1308.02,685.37 1311.99,664.43 1315.84,666.47 1319.81,664.43 1323.66,668.52 1327.88,675.86 1331.73,739.88 1335.7,704.98 1339.55,675.26 1343.52,672.49 1347.37,665.27 1351.34,657.45 1355.31,668.28 1359.16,669.48 1363.13,675.26 1367.11,662.02 1371.08,669.12 1374.93,666.23 1378.9,661.42 1382.87,658.65 1386.72,672.49 1390.69,670.08 1394.66,652.64 1398.51,662.02 1402.48,664.43 1406.34,657.81 1410.31,661.42 1414.28,669.48 1418.37,674.54 1422.34,665.87 1426.31,655.4 1430.3,668.5 1434.15,665.49 1438.12,668.13 1442.09,674.51 1445.94,671.14 1450.16,669.34 1450.16,783.1" fill="#ef843c" fill-opacity="0.1"/><polyline points="1012.46,754.44 1016.43,685.13 1020.64,680.55 1024.61,683.32 1028.71,675.26 1032.92,667.44 1036.53,667.68 1040.5,672.25 1044.47,682.72 1048.32,666.71 1052.29,662.86 1056.14,660.7 1060.11,669.24 1063.97,665.03 1067.94,658.89 1071.91,659.49 1075.76,660.7 1079.85,670.32 1083.46,669.48 1087.67,672.49 1091.4,674.06 1095.25,664.07 1099.34,653.48 1103.44,667.68 1107.29,666.47 1111.14,669.72 1115.11,662.62 1119.08,668.64 1123.05,674.66 1126.9,663.23 1130.75,664.43 1134.72,661.9 1138.57,663.1 1142.79,674.06 1146.64,668.04 1150.61,672.25 1154.46,672.49 1158.43,663.83 1162.28,663.1 1166.25,669.84 1170.46,676.7 1174.31,674.9 1178.29,666.47 1182.14,658.05 1186.11,669.24 1189.96,663.47 1193.93,669.24 1197.9,675.5 1201.75,676.1 1205.6,657.45 1209.57,660.22 1213.54,675.5 1217.39,663.23 1221.61,677.67 1225.59,675.5 1229.44,671.53 1233.41,668.64 1237.26,666.47 1241.23,660.46 1245.08,670.08 1249.06,673.94 1253.03,680.91 1256.88,668.88 1260.85,655.88 1264.7,665.27 1268.67,671.53 1272.52,666.11 1276.49,674.06 1280.34,669.72 1284.31,660.22 1288.29,662.02 1292.14,667.68 1296.11,669.24 1300.08,668.88 1304.05,677.3 1308.02,685.37 1311.99,664.43 1315.84,666.47 1319.81,664.43 1323.66,668.52 1327.88,675.86 1331.73,739.88 1335.7,704.98 1339.55,675.26 1343.52,672.49 1347.37,665.27 1351.34,657.45 1355.31,668.28 1359.16,669.48 1363.13,675.26 1367.11,662.02 1371.08,669.12 1374.93,666.23 1378.9,661.42 1382.87,658.65 1386.72,672.49 1390.69,670.08 1394.66,652.64 1398.51,662.02 1402.48,664.43 1406.34,657.81 1410.31,661.42 1414.28,669.48 1418.37,674.54 1422.34,665.87 1426.31,655.4 1430.3,668.5 1434.15,665.49 1438.12,668.13 1442.09,674.51 1445.94,671.14 1450.16,669.34" fill="none" stroke="#ef843c" stroke-width="1.15" stroke-linejoin="round"/><polygon points="1012.46,783.1 1012.46,778.15 1016.43,729.88 1020.64,726.69 1024.61,728.62 1028.71,723 1032.92,717.56 1036.53,717.72 1040.5,720.91 1044.47,728.2 1048.32,717.05 1052.29,714.37 1056.14,712.86 1060.11,718.81 1063.97,715.88 1067.94,711.6 1071.91,712.02 1075.76,712.86 1079.85,719.56 1083.46,718.98 1087.67,721.07 1091.4,722.17 1095.25,715.21 1099.34,707.83 1103.44,717.72 1107.29,716.88 1111.14,719.14 1115.11,714.2 1119.08,718.39 1123.05,722.59 1126.9,714.62 1130.75,715.46 1134.72,713.7 1138.57,714.53 1142.79,722.17 1146.64,717.97 1150.61,720.91 1154.46,721.07 1158.43,715.04 1162.28,714.53 1166.25,719.23 1170.46,724.01 1174.31,722.75 1178.29,716.88 1182.14,711.02 1186.11,718.81 1189.96,714.79 1193.93,718.81 1197.9,723.17 1201.75,723.59 1205.6,710.6 1209.57,712.53 1213.54,723.17 1217.39,714.62 1221.61,724.68 1225.59,723.17 1229.44,720.41 1233.41,718.39 1237.26,716.88 1241.23,712.69 1245.08,719.4 1249.06,722.08 1253.03,726.94 1256.88,718.56 1260.85,709.5 1264.7,716.05 1268.67,720.41 1272.52,716.63 1276.49,722.17 1280.34,719.14 1284.31,712.53 1288.29,713.78 1292.14,717.72 1296.11,718.81 1300.08,718.56 1304.05,724.42 1308.02,730.04 1311.99,715.46 1315.84,716.88 1319.81,715.46 1323.66,718.31 1327.88,723.42 1331.73,768.01 1335.7,743.7 1339.55,723 1343.52,721.07 1347.37,716.05 1351.34,710.6 1355.31,718.14 1359.16,718.98 1363.13,723 1367.11,713.78 1371.08,718.73 1374.93,716.71 1378.9,713.36 1382.87,711.43 1386.72,721.07 1390.69,719.4 1394.66,707.25 1398.51,713.78 1402.48,715.46 1406.34,710.85 1410.31,713.36 1414.28,718.98 1418.37,722.5 1422.34,716.46 1426.31,709.17 1430.3,718.29 1434.15,716.2 1438.12,718.04 1442.09,722.48 1445.94,720.13 1450.16,718.88 1450.16,783.1" fill="#7eb26d" fill-opacity="0.1"/><polyline points="1012.46,778.15 1016.43,729.88 1020.64,726.69 1024.61,728.62 1028.71,723 1032.92,717.56 1036.53,717.72 1040.5,720.91 1044.47,728.2 1048.32,717.05 1052.29,714.37 1056.14,712.86 1060.11,718.81 1063.97,715.88 1067.94,711.6 1071.91,712.02 1075.76,712.86 1079.85,719.56 1083.46,718.98 1087.67,721.07 1091.4,722.17 1095.25,715.21 1099.34,707.83 1103.44,717.72 1107.29,716.88 1111.14,719.14 1115.11,714.2 1119.08,718.39 1123.05,722.59 1126.9,714.62 1130.75,715.46 1134.72,713.7 1138.57,714.53 1142.79,722.17 1146.64,717.97 1150.61,720.91 1154.46,721.07 1158.43,715.04 1162.28,714.53 1166.25,719.23 1170.46,724.01 1174.31,722.75 1178.29,716.88 1182.14,711.02 1186.11,718.81 1189.96,714.79 1193.93,718.81 1197.9,723.17 1201.75,723.59 1205.6,710.6 1209.57,712.53 1213.54,723.17 1217.39,714.62 1221.61,724.68 1225.59,723.17 1229.44,720.41 1233.41,718.39 1237.26,716.88 1241.23,712.69 1245.08,719.4 1249.06,722.08 1253.03,726.94 1256.88,718.56 1260.85,709.5 1264.7,716.05 1268.67,720.41 1272.52,716.63 1276.49,722.17 1280.34,719.14 1284.31,712.53 1288.29,713.78 1292.14,717.72 1296.11,718.81 1300.08,718.56 1304.05,724.42 1308.02,730.04 1311.99,715.46 1315.84,716.88 1319.81,715.46 1323.66,718.31 1327.88,723.42 1331.73,768.01 1335.7,743.7 1339.55,723 1343.52,721.07 1347.37,716.05 1351.34,710.6 1355.31,718.14 1359.16,718.98 1363.13,723 1367.11,713.78 1371.08,718.73 1374.93,716.71 1378.9,713.36 1382.87,711.43 1386.72,721.07 1390.69,719.4 1394.66,707.25 1398.51,713.78 1402.48,715.46 1406.34,710.85 1410.31,713.36 1414.28,718.98 1418.37,722.5 1422.34,716.46 1426.31,709.17 1430.3,718.29 1434.15,716.2 1438.12,718.04 1442.09,722.48 1445.94,720.13 1450.16,718.88" fill="none" stroke="#7eb26d" stroke-width="0.8" stroke-linejoin="round"/><polygon points="1012.46,783.1 1012.46,778.15 1016.43,729.88 1020.64,726.69 1024.61,728.62 1028.71,723 1032.92,717.56 1036.53,717.72 1040.5,720.91 1044.47,728.2 1048.32,717.05 1052.29,714.37 1056.14,712.86 1060.11,718.81 1063.97,715.88 1067.94,711.6 1071.91,712.02 1075.76,712.86 1079.85,719.56 1083.46,718.98 1087.67,721.07 1091.4,722.17 1095.25,715.21 1099.34,707.83 1103.44,717.72 1107.29,716.88 1111.14,719.14 1115.11,714.2 1119.08,718.39 1123.05,722.59 1126.9,714.62 1130.75,715.46 1134.72,713.7 1138.57,714.53 1142.79,722.17 1146.64,717.97 1150.61,720.91 1154.46,721.07 1158.43,715.04 1162.28,714.53 1166.25,719.23 1170.46,724.01 1174.31,722.75 1178.29,716.88 1182.14,711.02 1186.11,718.81 1189.96,714.79 1193.93,718.81 1197.9,723.17 1201.75,723.59 1205.6,710.6 1209.57,712.53 1213.54,723.17 1217.39,714.62 1221.61,724.68 1225.59,723.17 1229.44,720.41 1233.41,718.39 1237.26,716.88 1241.23,712.69 1245.08,719.4 1249.06,722.08 1253.03,726.94 1256.88,718.56 1260.85,709.5 1264.7,716.05 1268.67,720.41 1272.52,716.63 1276.49,722.17 1280.34,719.14 1284.31,712.53 1288.29,713.78 1292.14,717.72 1296.11,718.81 1300.08,718.56 1304.05,724.42 1308.02,730.04 1311.99,715.46 1315.84,716.88 1319.81,715.46 1323.66,718.31 1327.88,723.42 1331.73,768.01 1335.7,743.7 1339.55,723 1343.52,721.07 1347.37,716.05 1351.34,710.6 1355.31,718.14 1359.16,718.98 1363.13,723 1367.11,713.78 1371.08,718.73 1374.93,716.71 1378.9,713.36 1382.87,711.43 1386.72,721.07 1390.69,719.4 1394.66,707.25 1398.51,713.78 1402.48,715.46 1406.34,710.85 1410.31,713.36 1414.28,718.98 1418.37,722.5 1422.34,716.46 1426.31,709.17 1430.3,718.29 1434.15,716.2 1438.12,718.04 1442.09,722.48 1445.94,720.13 1450.16,718.88 1450.16,783.1" fill="#eab839" fill-opacity="0.1"/><polyline points="1012.46,778.15 1016.43,729.88 1020.64,726.69 1024.61,728.62 1028.71,723 1032.92,717.56 1036.53,717.72 1040.5,720.91 1044.47,728.2 1048.32,717.05 1052.29,714.37 1056.14,712.86 1060.11,718.81 1063.97,715.88 1067.94,711.6 1071.91,712.02 1075.76,712.86 1079.85,719.56 1083.46,718.98 1087.67,721.07 1091.4,722.17 1095.25,715.21 1099.34,707.83 1103.44,717.72 1107.29,716.88 1111.14,719.14 1115.11,714.2 1119.08,718.39 1123.05,722.59 1126.9,714.62 1130.75,715.46 1134.72,713.7 1138.57,714.53 1142.79,722.17 1146.64,717.97 1150.61,720.91 1154.46,721.07 1158.43,715.04 1162.28,714.53 1166.25,719.23 1170.46,724.01 1174.31,722.75 1178.29,716.88 1182.14,711.02 1186.11,718.81 1189.96,714.79 1193.93,718.81 1197.9,723.17 1201.75,723.59 1205.6,710.6 1209.57,712.53 1213.54,723.17 1217.39,714.62 1221.61,724.68 1225.59,723.17 1229.44,720.41 1233.41,718.39 1237.26,716.88 1241.23,712.69 1245.08,719.4 1249.06,722.08 1253.03,726.94 1256.88,718.56 1260.85,709.5 1264.7,716.05 1268.67,720.41 1272.52,716.63 1276.49,722.17 1280.34,719.14 1284.31,712.53 1288.29,713.78 1292.14,717.72 1296.11,718.81 1300.08,718.56 1304.05,724.42 1308.02,730.04 1311.99,715.46 1315.84,716.88 1319.81,715.46 1323.66,718.31 1327.88,723.42 1331.73,768.01 1335.7,743.7 1339.55,723 1343.52,721.07 1347.37,716.05 1351.34,710.6 1355.31,718.14 1359.16,718.98 1363.13,723 1367.11,713.78 1371.08,718.73 1374.93,716.71 1378.9,713.36 1382.87,711.43 1386.72,721.07 1390.69,719.4 1394.66,707.25 1398.51,713.78 1402.48,715.46 1406.34,710.85 1410.31,713.36 1414.28,718.98 1418.37,722.5 1422.34,716.46 1426.31,709.17 1430.3,718.29 1434.15,716.2 1438.12,718.04 1442.09,722.48 1445.94,720.13 1450.16,718.88" fill="none" stroke="#eab839" stroke-width="1.15" stroke-linejoin="round"/><path d="M1011.4 633.6V783.1" stroke="#00cbf5" stroke-width="1.1" stroke-dasharray="2.65 2.2" fill="none"/><path d="M1006.1 789.8L1011.4 784.3L1016.7 789.8Z" fill="#00b7e4"/><path d="M1786.8 639.2L1790.3 642.6L1793.8 639.2" stroke="#33a2e5" stroke-width="1.5" fill="none"/><rect x="1477.2" y="680.8" width="332.8" height="27.1" fill="#1b1d20"/><rect x="1477.2" y="735.5" width="332.8" height="27.4" fill="#1b1d20"/><path d="M1492.2 666.05h9.9" stroke="#ef843c" stroke-width="1.7" stroke-linecap="round" fill="none"/><path d="M1492.2 693.55h9.9" stroke="#6ed0e0" stroke-width="1.7" stroke-linecap="round" fill="none"/><path d="M1492.2 720.95h9.9" stroke="#eab839" stroke-width="1.7" stroke-linecap="round" fill="none"/><path d="M1492.2 748.45h9.9" stroke="#7eb26d" stroke-width="1.7" stroke-linecap="round" fill="none"/></svg><div class="labels"><div class="t title ac" style="left:292.5px;width:300px;text-align:center;top:8px;">Network Traffic</div><div class="t ax ar" style="right:849.4px;top:42px;">391 KiB</div><div class="t ax ar" style="right:849.4px;top:91px;">293 KiB</div><div class="t ax ar" style="right:849.4px;top:140px;">195 KiB</div><div class="t ax ar" style="right:849.4px;top:189px;">98 KiB</div><div class="t ax ac" style="left:5.5px;width:300px;text-align:center;top:212px;">22:14</div><div class="t ax ac" style="left:100.5px;width:300px;text-align:center;top:212px;">22:16</div><div class="t ax ac" style="left:194.6px;width:300px;text-align:center;top:212px;">22:18</div><div class="t ax ac" style="left:288.9px;width:300px;text-align:center;top:212px;">22:20</div><div class="t ax ac" style="left:383.9px;width:300px;text-align:center;top:212px;">22:22</div><div class="t hd ar" style="right:115.6px;top:49px;">max</div><div class="t hd ar" style="right:42.3px;top:49px;">avg</div><div class="t lg al" style="left:593.8px;top:74px;">all</div><div class="t lg ar" style="right:116px;top:74px;">355.42 KiB</div><div class="t lg ar" style="right:25.3px;top:74px;">320.71 KiB</div><div class="t lg al" style="left:593.8px;top:101px;">8_<span class="cj">生成订单信息</span></div><div class="t lg ar" style="right:116px;top:101px;">355.42 KiB</div><div class="t lg ar" style="right:25.3px;top:101px;">320.71 KiB</div><div class="t lg al" style="left:593.8px;top:129px;">all</div><div class="t lg ar" style="right:116px;top:129px;">247.56 KiB</div><div class="t lg ar" style="right:25.3px;top:129px;">223.31 KiB</div><div class="t lg al" style="left:593.8px;top:156px;">8_<span class="cj">生成订单信息</span></div><div class="t lg ar" style="right:116px;top:156px;">247.56 KiB</div><div class="t lg ar" style="right:25.3px;top:156px;">223.31 KiB</div></div></div>
</body></html>
